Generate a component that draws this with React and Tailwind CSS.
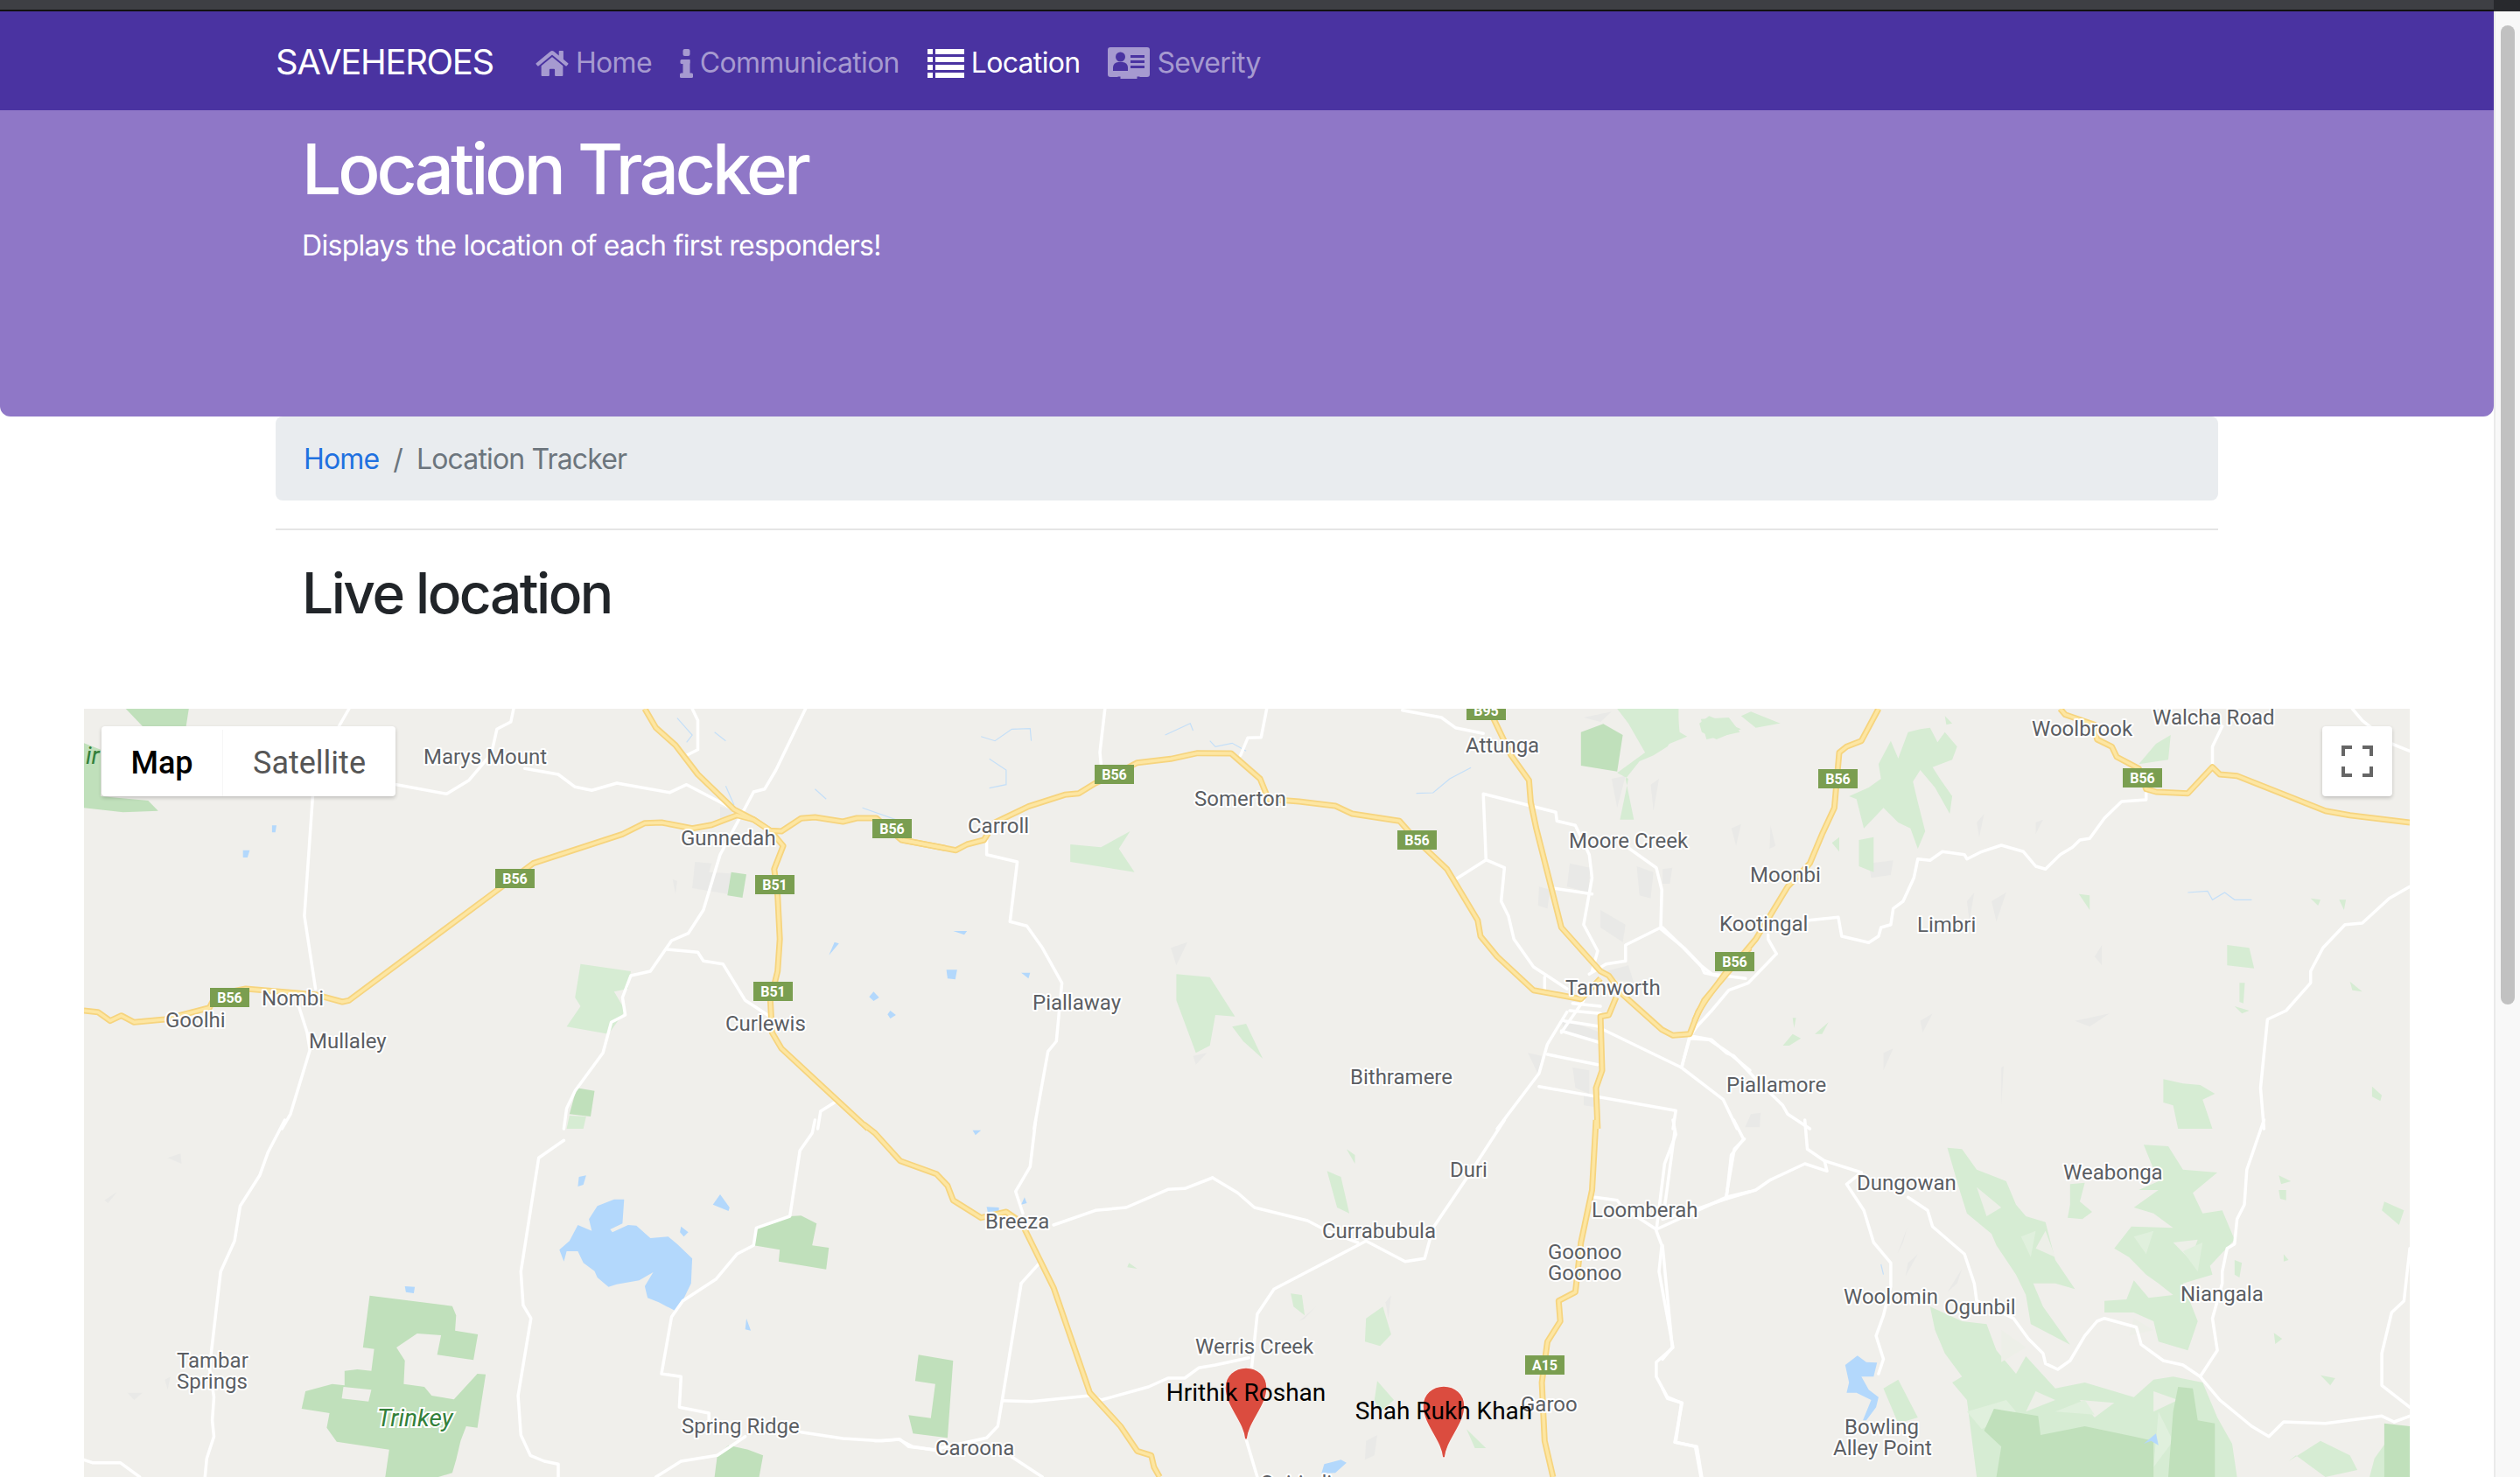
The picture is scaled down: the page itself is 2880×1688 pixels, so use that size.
import React from "react";
import { FaHome } from "react-icons/fa";

const Z = { a: [80, 790, 1.568], b: [1000, 790, 1.568], c: [1900, 790, 1.782], d: [80, 1280, 1.568], e: [1000, 1280, 1.568], f: [1900, 1280, 1.782] };
const P = (k, s) => {
  const [x0, y0, sx] = Z[k];
  return s.trim().split(/\s+/).map((q) => {
    const [x, y] = q.split(",").map(Number);
    return `${(x0 + x / sx).toFixed(1)},${(y0 + y / 3).toFixed(1)}`;
  }).join(" ");
};

const YELLOW = [
  ["a", "25,1095 50,1100 72,1130 92,1112 115,1135 170,1125 250,1085 262,1040 315,1020 440,1040 488,1065 500,1060 760,690 830,590 990,490 1030,452 1060,450 1115,470 1150,458 1195,425 1225,440 1255,478 1275,480 1310,436 1335,432 1385,447 1410,435 1445,435 1490,510 1568,538"],
  ["b", "50,510 145,545 165,525 195,510 215,450 275,395 340,355 365,350 395,315 430,285 470,245 530,232 578,212 638,213 690,300 705,370 760,378 825,393 855,420 940,445 970,510 1025,610 1080,785 1085,840 1115,910 1180,1025 1265,1055 1300,985"],
  ["b", "1100,60 1140,220 1172,305 1175,380 1185,470 1230,810 1300,960 1315,975 1340,1040 1410,1160 1430,1180 1460,1175 1475,1100 1490,1055 1530,950 1568,880"],
  ["c", "65,1130 85,1060 145,940 190,850 255,670 300,590 325,490 350,400 360,210 375,190 405,170 440,60"],
  ["b", "1328,1050 1315,1110 1300,1115 1303,1300 1292,1360 1295,1500"],
  ["e", "1292,0 1285,240 1265,420 1255,590 1225,620 1228,690 1205,760 1195,900 1200,1100 1215,1224"],
  ["a", "1030,60 1050,125 1085,185 1125,285 1190,405 1225,440 1255,478 1278,530 1262,610 1268,700 1272,850 1268,960 1255,1060 1258,1170 1275,1225 1430,1500"],
  ["e", "-20,15 0,45 45,140 110,185 130,225 140,275 190,335 235,315 262,350 320,575 385,935 440,1050 470,1135 495,1150 500,1190 510,1224"],
  ["c", "810,60 820,80 880,115 885,165 915,190 925,225 970,265 985,335 1005,345 1070,350 1120,260 1135,285 1170,290 1350,410 1400,425 1522,450"],
];

const WHITE = [
  ["a", "795,60 790,105 765,130 755,215 715,305 675,352 585,320"],
  ["a", "500,60 482,120"],
  ["a", "815,265 875,285 905,328 935,340 980,315 1075,347 1105,320 1190,405"],
  ["a", "1115,60 1125,100 1125,200 1105,220"],
  ["a", "1318,60 1265,270 1245,335 1225,345 1165,560 1135,750 1108,830 1078,855 1040,960 1005,975 990,1050 995,1110 970,1135 955,1240 905,1370 890,1430 885,1500"],
  ["d", "885,70 840,130 808,520 812,635 826,680 803,945 808,1080 825,1150 850,1170 875,1180 875,1224"],
  ["a", "1070,885 1125,895 1135,925 1170,935 1210,1060 1258,1120"],
  ["a", "435,360 420,770 440,1020"],
  ["a", "410,1080 425,1170 430,1230 395,1450 380,1500"],
  ["d", "385,0 355,110 340,190 305,295 295,415 270,520 250,850 258,950 255,1030 258,1085 245,1160 242,1224"],
  ["a", "1340,1500 1345,1440 1370,1410"],
  ["d", "1335,0 1330,45 1308,105 1290,330 1230,370 1225,430 1195,460 1158,545 1098,620 1078,675 1060,870 1095,880 1092,985 1145,1005 1145,1040"],
  ["d", "1310,1070 1385,1092 1455,1100 1485,1095 1510,1120 1560,1135"],
  ["d", "1210,1085 1160,1150 1095,1170 1050,1224"],
  ["d", "25,1165 40,1175 90,1175 125,1224"],
  ["b", "412,60 403,210 405,250"],
  ["b", "702,60 692,158 668,160 655,220"],
  ["b", "200,510 200,560 255,585 242,790 272,805 300,880 335,1000 325,1200 310,1235 285,1500"],
  ["e", "288,0 278,160 252,245 265,320"],
  ["b", "945,65 1015,90 1040,125 1090,145"],
  ["b", "1040,645 1095,578 1090,352 1220,415 1222,445 1255,460 1280,560 1285,640 1270,800 1295,890 1285,960"],
  ["b", "1095,578 1128,605 1122,720 1135,770 1145,850 1180,945 1240,1020"],
  ["b", "1215,675 1285,695"],
  ["b", "1345,530 1400,605 1410,680 1408,810 1345,870 1345,925 1310,935 1280,970"],
  ["b", "1408,815 1450,880 1480,940 1500,970 1560,985"],
  ["b", "1240,1100 1205,1210 1190,1310 1115,1500"],
  ["b", "1205,1245 1295,1280"],
  ["b", "1190,1355 1435,1438 1430,1500"],
  ["b", "1305,1160 1445,1290 1520,1400 1545,1500"],
  ["b", "1445,1290 1460,1190 1495,1195 1530,1240 1568,1300"],
  ["b", "1200,980 1200,1030"],
  ["b", "1250,1070 1300,1080"],
  ["b", "1245,1095 1300,1105"],
  ["b", "1235,1130 1300,1150"],
  ["b", "1230,1165 1300,1205"],
  ["b", "1270,1060 1230,1170"],
  ["c", "50,1180 100,1195 130,1240 145,1250 190,1330 245,1420 255,1450 300,1500"],
  ["c", "232,900 215,850 215,835"],
  ["c", "232,900 175,1000 135,1025 100,1095 70,1150 55,1185 40,1285"],
  ["c", "0,810 40,875 80,945 85,965 125,980"],
  ["c", "985,350 985,372 935,378 900,435 870,505 850,510 835,535 810,560 780,610 760,600 735,550 690,528 650,550 620,575 615,560 570,550 545,580 520,575 512,640 490,720 470,745 465,800 445,810 440,840 420,862 365,840 358,775 298,785"],
  ["c", "1405,60 1425,100 1485,180 1522,205"],
  ["c", "1140,120 1120,190 1120,260"],
  ["c", "1522,670 1480,710 1425,795 1390,800 1345,880 1320,960 1320,1000 1270,1095 1232,1125 1218,1360 1225,1500"],
  ["f", "1225,0 1190,170 1185,290 1170,340 1165,425 1150,440 1140,520 1140,560 1120,680 1130,790 1095,880 1135,960 1200,1050 1235,1085 1265,1035 1350,1040 1465,1015 1490,1035 1522,1015"],
  ["f", "1522,440 1510,620 1485,660 1465,800 1465,910 1522,985"],
  ["f", "290,0 295,100 330,140 405,180 375,220 410,310 430,420 465,490 465,570 450,670 435,740 450,820 440,870"],
  ["f", "330,140 335,175 290,150 220,205 190,240 130,270 70,305 0,340"],
  ["f", "140,120 130,270"],
  ["f", "25,40 5,290"],
  ["f", "145,0 165,65 140,120"],
  ["f", "500,265 540,310 550,365 615,460 635,560 640,620 715,680 745,750 775,800 780,835 805,855 830,825 860,740 885,690 900,680 965,710 975,770 1020,825 1060,840 1095,880"],
  ["f", "0,430 20,780 0,820"],
  ["f", "0,920 10,955 40,970 25,1105 70,1120 80,1224"],
  ["e", "1128,0 1060,200 1000,370 985,475 950,485 880,415 715,580 685,665 675,850"],
  ["e", "605,198 650,250 680,300 775,345 810,380 865,420"],
  ["e", "605,198 555,235 525,238 450,300 395,310 320,360"],
  ["e", "670,815 610,840 580,850 555,885 525,885 490,915 405,960 385,945 280,965 228,962"],
  ["e", "262,560 228,960 220,1050 200,1090 105,1130 60,1120 45,1095 0,1100"],
  ["e", "245,1155 300,1224"],
  ["e", "262,560 295,490"],
  ["e", "665,1095 685,1224"],
  ["e", "1430,0 1435,50 1415,150 1400,380 1410,430 1405,520 1430,780 1400,830 1400,880 1420,950 1445,970 1435,1105 1470,1120 1480,1224"],
  ["e", "1525,265 1540,100 1558,65"],
  ["e", "1290,265 1330,275 1340,300 1400,375 1480,305 1525,265 1568,245"],
];

const G_MED = [
  ["a", "100,60 213,60 208,120 130,120"],
  ["a", "25,178 55,200 55,360 140,375 158,410 95,415 25,400"],
  ["a", "1185,620 1212,628 1205,708 1178,700"],
  ["a", "908,1360 940,1370 933,1458 895,1450"],
  ["b", "1265,140 1305,112 1340,150 1330,275 1265,255"],
  ["d", "537,602 685,638 692,670 690,722 731,735 723,823 658,805 665,738 622,732 585,780 600,825 598,905 635,915 648,945 688,958 730,870 745,872 730,1055 710,1050 700,1100 692,1165 685,1210 660,1224 565,1224 572,1130 478,1103 460,1055 465,1005 415,990 422,930 470,905 492,910 492,860 515,855 540,860 545,785 525,780"],
  ["d", "1290,330 1310,328 1338,355 1330,430 1360,438 1355,512 1270,485 1272,445 1225,430 1230,372 1280,335"],
  ["e", "78,805 140,825 130,1090 68,1075 60,1012 100,1022 108,905 72,895"],
  ["d", "1180,1115 1215,1130 1242,1150 1235,1224 1155,1224 1160,1150"],
  ["f", "675,990 765,1015 770,1080 860,1050 960,1085 1000,1100 1000,1224 680,1224 690,1120 655,1065"],
  ["f", "1050,915 1080,920 1090,1030 1125,1040 1125,1224 1030,1224 1040,1000"],
  ["f", "1470,1040 1522,1050 1522,1224 1470,1224"],
];

const G_LIGHT = [
  ["a", "915,935 1005,960 1000,1020 975,1030 995,1095 965,1175 890,1150 915,1080 905,1050"],
  ["a", "895,1455 925,1458 920,1500 890,1500"],
  ["b", "350,525 405,535 457,480 437,540 465,620 350,585"],
  ["b", "540,970 600,980 645,1115 610,1110 600,1215 575,1240 540,1060"],
  ["b", "640,1150 665,1140 695,1260 660,1200"],
  ["b", "1330,60 1440,60 1440,130 1420,190 1395,220 1370,240 1345,300 1360,440 1335,440 1350,300 1330,280 1380,210 1350,110"],
  ["b", "1480,95 1530,90 1550,140 1490,165"],
  ["c", "0,60 30,60 35,140 50,155 0,190"],
  ["c", "75,110 95,85 160,130 110,165 80,140"],
  ["c", "160,85 180,70 240,110 190,125"],
  ["c", "440,250 465,170 480,230 500,140 525,130 545,125 560,175 575,140 600,190 590,235 550,260 565,300 590,360 585,420 555,330 525,270 510,310 520,380 535,480 520,540 505,470 480,450 450,400 410,470 395,370 380,360 420,330 445,300"],
  ["c", "400,510 430,500 430,620 400,600"],
  ["c", "345,520 360,500 360,550"],
  ["c", "970,250 1005,180 1035,150 1030,235"],
  ["c", "575,85 590,110 578,115"],
  ["c", "1150,870 1195,880 1205,950 1150,940"],
  ["c", "1020,1330 1060,1345 1095,1350 1125,1380 1100,1400 1120,1500 1050,1500 1040,1420 1020,1410"],
  ["c", "1320,710 1340,715 1335,735"],
  ["c", "1378,715 1392,715 1388,750"],
  ["c", "1175,1000 1186,1000 1183,1070 1175,1065"],
  ["c", "1165,1080 1195,1095 1180,1105"],
  ["c", "1400,995 1425,1030 1405,1025"],
  ["c", "1445,1355 1465,1385 1462,1405 1445,1390"],
  ["c", "848,695 870,700 870,750"],
  ["c", "265,1120 272,1120 268,1155"],
  ["c", "310,1175 338,1135 325,1175"],
  ["c", "245,1215 265,1175 282,1190 258,1215"],
  ["e", "810,175 835,195 850,320 828,300"],
  ["e", "880,680 910,640 925,735 905,775 878,760"],
  ["e", "745,595 765,600 770,670 750,640"],
  ["e", "900,895 930,960 905,1000 895,960"],
  ["e", "1060,1060 1095,1125 1075,1125"],
  ["e", "845,100 860,120 860,150"],
  ["e", "455,490 470,510 452,505"],
  ["f", "580,95 610,100 640,170 700,210 720,290 740,330 780,350 800,480 840,580 800,560 755,560 775,640 830,770 750,700 740,600 720,530 680,430 670,390 620,320 605,240"],
  ["f", "980,85 1030,90 1060,170 1130,180 1080,250 1100,320 1140,310 1165,410 1115,500 1120,530 1060,560 1090,690 1070,790 1010,760 1000,690 960,660 900,660 900,620 945,615 960,550 990,610 1040,600 1010,560 985,530 950,470 920,440 955,365 1040,370 1000,320 960,300 1010,240 970,240 1010,210"],
  ["f", "545,640 610,690 660,700 680,790 720,870 740,810 800,920 860,900 960,950 1000,890 1040,880 1100,900 1130,1020 1160,1110 1170,1224 640,1224 620,960 590,900 610,880 575,800 555,720"],
  ["f", "830,220 860,215 850,280 875,315 855,340 825,335 830,290"],
  ["f", "1470,280 1510,310 1500,360 1465,310"],
  ["f", "1275,1170 1340,1100 1400,1150 1415,1200 1350,1224 1290,1150"],
  ["f", "1450,1160 1480,1090 1522,1110 1522,1224 1440,1224"],
  ["f", "450,920 480,890 520,1020 480,1040"],
  ["f", "1165,480 1180,490 1175,540 1165,530"],
  ["f", "1255,190 1280,210 1260,220"],
  ["f", "1255,240 1270,240 1270,275 1258,270"],
  ["f", "1245,730 1262,750 1248,768"],
  ["f", "1265,460 1275,480 1265,485"],
  ["f", "1340,875 1370,885 1360,910"],
];

const CUTS = [
  ["f", "640,230 690,300 660,330"],
  ["f", "780,380 800,470 760,440"],
  ["f", "1040,420 1090,410 1075,480"],
  ["f", "960,680 1000,720 950,740"],
  ["f", "690,720 740,780 690,830"],
  ["f", "850,960 920,970 880,1020"],
  ["f", "760,930 800,960 740,1000"],
  ["f", "1000,930 1050,960 1000,1000"],
];

const PALE = [
  ["f", "620,1000 700,960 720,1000 650,1060"],
  ["f", "800,1000 860,960 880,1010"],
  ["f", "1010,1000 1040,1100 1000,1190"],
  ["f", "1060,450 1100,420 1090,520"],
  ["f", "730,400 760,380 750,470"],
  ["f", "960,400 1000,380 985,460"],
];

const WATER = [
  ["d", "945,295 975,272 993,272 990,355 968,375 972,385 1000,360 1015,362 1040,405 1072,400 1088,425 1115,475 1113,560 1090,650 1085,655 1055,625 1035,610 1030,570 1045,522 1020,550 980,563 965,572 945,540 940,518 920,490 910,450 890,450 885,485 877,445 895,415 910,360 935,380 930,340"],
  ["d", "1165,255 1182,300 1180,312 1152,290"],
  ["d", "1095,365 1108,385 1100,400 1093,385"],
  ["d", "912,195 925,190 920,222 910,228"],
  ["d", "600,570 618,572 616,594 602,590"],
  ["d", "1212,680 1220,722 1210,718"],
  ["f", "397,808 415,830 437,832 430,880 405,880 420,925 440,950 435,985 415,1030 408,1030 425,960 395,935 375,935 380,900 372,840"],
  ["f", "980,1110 1005,1075 1010,1115 995,1100"],
  ["e", "805,1180 835,1165 845,1175 825,1210 800,1212"],
  ["b", "128,955 147,955 144,988 130,985"],
  ["b", "262,965 278,965 275,985"],
  ["b", "140,822 165,822 160,835"],
  ["a", "1370,860 1378,865 1360,905"],
  ["a", "1440,1030 1450,1050 1440,1062 1432,1048"],
  ["a", "1470,1095 1480,1110 1470,1122 1465,1108"],
  ["a", "310,545 322,545 318,570 310,570"],
  ["a", "362,460 370,460 368,484 362,484"],
  ["e", "175,35 190,35 180,52"],
  ["e", "268,265 272,285 262,290"],
  ["e", "200,298 222,300 222,312 202,315"],
];

const STREAM = [
  ["a", "1088,92 1115,150 1105,175"],
  ["a", "1155,140 1175,170"],
  ["a", "1175,325 1190,390"],
  ["a", "1335,335 1355,370"],
  ["a", "1420,400 1480,440"],
  ["b", "190,155 215,170 245,130 278,128 280,170"],
  ["b", "205,232 235,270 235,320 205,332"],
  ["b", "600,170 610,190 640,178 665,205"],
  ["b", "520,150 565,110 570,135"],
  ["b", "970,350 1000,348 1030,300 1068,262"],
  ["c", "1070,690 1110,685 1120,715 1145,690 1165,715 1200,715"],
  ["f", "445,495 450,530"],
];

const GRAY = [
  ["a", "1120,585 1150,590 1145,620 1185,625 1178,695 1115,675"],
  ["a", "1165,395 1190,410 1165,450"],
  ["a", "1080,645 1088,650 1085,695"],
  ["b", "1245,590 1282,605 1278,690 1240,670"],
  ["b", "1190,670 1210,680 1205,745 1188,735"],
  ["b", "1300,750 1345,800 1340,860 1300,810"],
  ["b", "1365,600 1395,620 1390,710 1370,700"],
  ["b", "1230,1120 1300,1170 1300,1210 1235,1170"],
  ["b", "1250,1290 1280,1300 1280,1380 1255,1360"],
  ["b", "1170,1240 1195,1250 1190,1320"],
  ["b", "1270,1380 1295,1390 1290,1425 1270,1420"],
  ["b", "1310,960 1350,940 1360,1000 1330,990"],
  ["b", "530,880 560,860 540,940"],
  ["b", "570,1250 595,1240 575,1280"],
  ["b", "1270,90 1320,70 1300,105"],
  ["b", "1390,320 1405,300 1395,410"],
  ["b", "1320,300 1345,290 1330,400"],
  ["c", "420,590 470,580 465,630 425,640"],
  ["c", "0,610 20,605 15,660 0,660"],
  ["c", "140,470 160,455 150,530"],
  ["c", "220,460 230,530 218,540"],
  ["c", "640,450 655,420 645,500"],
  ["c", "760,450 775,440 760,490"],
  ["c", "620,720 635,690 625,790"],
  ["c", "670,720 700,690 680,790"],
  ["c", "880,910 895,870 895,940"],
  ["c", "840,1130 910,1105 870,1150"],
  ["c", "450,1240 470,1225 450,1300"],
  ["c", "690,1290 695,1285 690,1420"],
  ["c", "525,1130 550,1105 530,1170"],
  ["c", "180,1450 200,1445 198,1495 168,1495"],
  ["f", "490,420 498,370 478,460"],
  ["f", "500,490 520,460 495,535"],
  ["f", "600,560 610,510 580,590"],
  ["d", "175,130 198,115 200,150"],
  ["d", "62,275 85,245 68,285"],
  ["d", "103,935 130,935 115,960"],
  ["d", "170,890 180,880 175,925"],
  ["e", "880,1100 900,1080 895,1150 878,1165"],
  ["e", "915,625 925,600 920,680"],
  ["e", "760,690 790,640 770,680"],
];

const LABELS = [
  ["Marys Mount", 484, 873], ["Gunnedah", 778, 966], ["Nombi", 299, 1149], ["Goolhi", 189, 1174], ["Mullaley", 353, 1198], ["Curlewis", 829, 1178],
  ["Carroll", 1106, 952], ["Somerton", 1365, 921], ["Attunga", 1675, 860], ["Moore Creek", 1793, 969], ["Piallaway", 1180, 1154], ["Tamworth", 1789, 1137], ["Bithramere", 1543, 1239],
  ["Woolbrook", 2322, 841], ["Walcha Road", 2460, 828], ["Moonbi", 2000, 1008], ["Kootingal", 1965, 1064], ["Limbri", 2191, 1065], ["Piallamore", 1973, 1248],
  ["Tambar", 202, 1563], ["Springs", 202, 1587], ["Spring Ridge", 779, 1638],
  ["Breeza", 1126, 1404], ["Duri", 1657, 1345], ["Currabubula", 1511, 1415], ["Loomberah", 1819, 1391], ["Goonoo", 1769, 1439], ["Goonoo", 1769, 1463], ["Werris Creek", 1366, 1547], ["Caroona", 1069, 1663], ["Garoo", 1738, 1613], ["Quirindi", 1440, 1703],
  ["Dungowan", 2122, 1360], ["Weabonga", 2358, 1348], ["Woolomin", 2107, 1490], ["Ogunbil", 2222, 1502], ["Niangala", 2492, 1487], ["Bowling", 2108, 1639], ["Alley Point", 2095, 1663],
];

const BADGES = [
  ["B56", 566, 993], ["B51", 863, 1000], ["B56", 997, 936], ["B51", 861, 1122], ["B56", 240, 1129],
  ["B95", 1676, 801], ["B56", 1251, 874], ["B56", 1597, 949], ["B56", 1960, 1088], ["B56", 2078, 879], ["B56", 2426, 878], ["A15", 1743, 1549],
];

function Pin({ x, y, name }) {
  return (
    <g>
      <path
        d={`M${x - 1.5} ${y + 82} C${x - 3} ${y + 62} ${x - 24} ${y + 44} ${x - 24} ${y + 23} C${x - 24} ${y + 9} ${x - 13} ${y} ${x} ${y} C${x + 13} ${y} ${x + 24} ${y + 9} ${x + 24} ${y + 23} C${x + 24} ${y + 44} ${x + 3} ${y + 62} ${x + 1.5} ${y + 82} Z`}
        fill="#db4c3f"
        stroke="#f6f1ee"
        strokeWidth="1.5"
      />
      <text x={x} y={y + 38} textAnchor="middle" fontSize="28" fill="#000" className="font-['Roboto',sans-serif]">{name}</text>
    </g>
  );
}

function MapArt() {
  return (
    <svg viewBox="96 810 2658 878" className="block w-full h-full">
      <rect x="96" y="810" width="2658" height="878" fill="#f0efeb" />
      {GRAY.map(([k, s], i) => <polygon key={i} points={P(k, s)} fill="#e9e9e7" />)}
      {G_LIGHT.map(([k, s], i) => <polygon key={i} points={P(k, s)} fill="#d6ecd3" />)}
      {CUTS.map(([k, s], i) => <polygon key={i} points={P(k, s)} fill="#edefe8" />)}
      {PALE.map(([k, s], i) => <polygon key={i} points={P(k, s)} fill="#e0f0dd" />)}
      {G_MED.map(([k, s], i) => <polygon key={i} points={P(k, s)} fill="#c0e0bb" />)}
      <polygon points={P("d", "490,915 540,925 535,965 487,955")} fill="#f0efeb" />
      {WATER.map(([k, s], i) => <polygon key={i} points={P(k, s)} fill="#b3d8fc" />)}
      {STREAM.map(([k, s], i) => <polyline key={i} points={P(k, s)} fill="none" stroke="#c4dff8" strokeWidth="1.2" />)}
      {WHITE.map(([k, s], i) => <polyline key={i} points={P(k, s)} fill="none" stroke="#ffffff" strokeWidth="3.5" strokeLinejoin="round" strokeLinecap="round" />)}
      {YELLOW.map(([k, s], i) => <polyline key={i} points={P(k, s)} fill="none" stroke="#f6d47e" strokeWidth="7" strokeLinejoin="round" />)}
      {YELLOW.map(([k, s], i) => <polyline key={i} points={P(k, s)} fill="none" stroke="#fde6a2" strokeWidth="3.5" strokeLinejoin="round" />)}
      {BADGES.map(([t, x, y], i) => (
        <g key={i}>
          <rect x={x} y={y} width="45" height="22" fill="#7a9e50" />
          <text x={x + 22.5} y={y + 17} textAnchor="middle" fontSize="16" fontWeight="700" fill="#fff" className="font-['Roboto',sans-serif]">{t}</text>
        </g>
      ))}
      {LABELS.map(([t, x, y], i) => (
        <text key={i} x={x} y={y} fontSize="24" fill="#5b5e63" stroke="#fff" strokeWidth="4" strokeLinejoin="round" paintOrder="stroke" className="font-['Roboto',sans-serif]">{t}</text>
      ))}
      <text x="431" y="1630" fontSize="28" fontStyle="italic" fill="#33803a" stroke="#fff" strokeWidth="4" paintOrder="stroke" className="font-['Roboto',sans-serif]">Trinkey</text>
      <text x="98" y="873" fontSize="28" fontStyle="italic" fill="#33803a" className="font-['Roboto',sans-serif]">ir</text>
      <Pin x={1424} y={1563} name="Hrithik Roshan" />
      <Pin x={1650} y={1584} name="Shah Rukh Khan" />
    </svg>
  );
}

function InfoIcon() {
  return (
    <svg width="15" height="33" viewBox="0 0 15 33" fill="currentColor">
      <rect x="3.5" y="0" width="8" height="8" rx="2" />
      <rect x="0.5" y="12" width="11" height="5" rx="1.5" />
      <rect x="3.5" y="12" width="8" height="18" />
      <rect x="0" y="27.5" width="15" height="5.5" rx="1.5" />
    </svg>
  );
}

function ListIcon() {
  return (
    <svg width="42" height="33" viewBox="0 0 42 33" fill="currentColor">
      {[0, 9, 18, 27].map((y) => (
        <g key={y}>
          <rect x="0" y={y} width="6" height="6" />
          <rect x="9" y={y} width="33" height="6" />
        </g>
      ))}
    </svg>
  );
}

function CardIcon() {
  return (
    <svg width="48" height="36" viewBox="0 0 48 36">
      <path fill="currentColor" d="M3 0H45A3 3 0 0 1 48 3V31A3 3 0 0 1 45 34H36.500V33.500H33.500V36H14.500V33.500H11.500V34H3A3 3 0 0 1 0 31V3A3 3 0 0 1 3 0Z" />
      <circle cx="14.500" cy="11" r="5.500" fill="#4a33a1" />
      <path fill="#4a33a1" d="M6 27V23A6 6 0 0 1 12 17H17A6 6 0 0 1 23 23V27Z" />
      <rect x="26" y="9" width="16" height="3" fill="#4a33a1" />
      <rect x="26" y="15" width="16" height="3" fill="#4a33a1" />
      <rect x="26" y="21" width="16" height="3" fill="#4a33a1" />
    </svg>
  );
}

function NavItem({ icon, label, active }) {
  return (
    <a className={`flex items-center gap-[8px] px-[16px] ${active ? "text-white" : "text-[#a69ad0]"}`}>
      {icon}
      <span>{label}</span>
    </a>
  );
}

export default function App() {
  return (
    <div className="flex h-screen overflow-hidden bg-white font-['Inter',sans-serif] text-[32px] leading-[48px] tracking-[-0.7px] text-[#212529]">
      <div className="flex min-w-0 flex-1 flex-col">
        <div className="h-[13px] shrink-0 border-b-2 border-[#111] bg-[#3e3f44]" />
        <nav className="flex h-[113px] shrink-0 items-center bg-[#4a33a1] pl-[315px] pt-[5px]">
          <span className="-mt-[2px] mr-[32px] text-[40px] leading-[60px] tracking-[-1.3px] text-white">SAVEHEROES</span>
          <NavItem icon={<FaHome className="h-[33px] w-[38px]" />} label="Home" />
          <NavItem icon={<InfoIcon />} label="Communication" />
          <NavItem icon={<ListIcon />} label="Location" active />
          <NavItem icon={<CardIcon />} label="Severity" />
        </nav>
        <header className="h-[350px] shrink-0 rounded-b-[12px] bg-[#8f77c7] pl-[345px] pt-[19px] text-white">
          <h1 className="mb-[16px] text-[80px] font-medium leading-[96px] tracking-[-4px]">Location Tracker</h1>
          <p>Displays the location of each first responders!</p>
        </header>
        <div className="ml-[315px] w-[2220px] shrink-0">
          <div className="flex h-[96px] items-center rounded-[8px] bg-[#e9ecef] px-[32px] pt-[1px] tracking-[-0.85px] text-[#6c757d]">
            <a className="text-[#1f71e0]">Home</a>
            <span className="px-[16px]">/</span>
            <span>Location Tracker</span>
          </div>
          <hr className="mt-[32px] border-t-2 border-[#e5e5e5]" />
          <h2 className="ml-[30px] mt-[33px] text-[64px] font-medium leading-[77px] tracking-[-2.5px]">Live location</h2>
        </div>
        <div className="relative ml-[96px] mt-[94px] min-h-0 w-[2658px] flex-1 overflow-hidden tracking-normal">
          <MapArt />
          <div className="absolute left-[20px] top-[20px] flex h-[80px] w-[336px] items-center rounded-[4px] bg-white pt-[4px] font-['Roboto',sans-serif] text-[36px] shadow-[0_2px_4px_rgba(0,0,0,0.2)]">
            <span className="flex h-full w-[138px] items-center justify-center font-medium text-black">Map</span>
            <span className="flex h-full flex-1 items-center justify-center border-l border-[#f6f6f6] text-[#565656]">Satellite</span>
          </div>
          <div className="absolute right-[20px] top-[20px] flex h-[80px] w-[80px] items-center justify-center rounded-[4px] bg-white shadow-[0_2px_4px_rgba(0,0,0,0.2)]">
            <svg width="36" height="36" viewBox="0 0 36 36" fill="none" stroke="#666" strokeWidth="4">
              <path d="M2 12V2H12M24 2H34V12M2 24V34H12M34 24V34H24" />
            </svg>
          </div>
        </div>
      </div>
      <aside className="relative w-[30px] shrink-0 border-l-2 border-[#eaeaea] bg-[#f8f8f8]">
        <div className="h-[13px] bg-[#28292d] -ml-[2px]" />
        <div className="absolute left-[6px] top-[29px] h-[1119px] w-[16px] rounded-full bg-[#c1c1c1]" />
      </aside>
    </div>
  );
}
